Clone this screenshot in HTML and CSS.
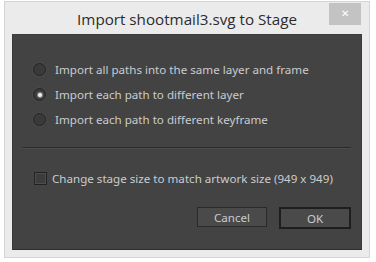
FILE: index.html
```html
<!DOCTYPE html>
<html lang="en">
<head>
    <meta charset="UTF-8">
    <title>Import to Stage</title>
    <link rel="stylesheet" href="styles.css">
</head>
<body>
    <!-- Dialog window -->
    <div class="window">
        <div class="titlebar">
            <span></span>
            <div class="title">Import shootmail3.svg to Stage</div>
            <button class="close-button">&#x2715;</button>
        </div>

        <div class="panel">
            <div class="options">
                <label class="radio-row"><span class="radio"></span>Import all paths into the same layer and frame</label>
                <label class="radio-row"><span class="radio checked"></span>Import each path to different layer</label>
                <label class="radio-row"><span class="radio"></span>Import each path to different keyframe</label>
            </div>

            <div class="separator"></div>

            <label class="check-row"><span class="checkbox"></span>Change stage size to match artwork size (949 x 949)</label>

            <div class="buttons">
                <button class="btn">Cancel</button>
                <button class="btn btn-default">OK</button>
            </div>
        </div>
    </div>
</body>
</html>
```

FILE: styles.css
```css
body {
    margin: 0;
    background: #ffffff;
    font-family: "Noto Sans", "DejaVu Sans", sans-serif;
}
.window {
    box-sizing: border-box;
    width: 366px;
    height: 257px;
    margin: 1px 0 0 4px;
    border: 1px solid #d4d4d4;
    background: #ebebeb;
    padding: 0 7px 7px 7px;
    display: flex;
    flex-direction: column;
}
.titlebar {
    height: 32px;
    display: grid;
    grid-template-columns: 33px 1fr 33px;
    align-items: start;
}
.title {
    text-align: center;
    font-family: "Open Sans", "Noto Sans", sans-serif;
    font-size: 15.2px;
    color: #2b2b2b;
    padding-top: 7px;
}
.close-button {
    margin-top: 1px;
    width: 32px;
    height: 22px;
    border: none;
    background: #c3c3c3;
    color: #ffffff;
    font-size: 10px;
    padding: 0;
    line-height: 22px;
}
/* dark Flash-style panel */
.panel {
    flex: 1;
    background: #434343;
    border: 1px solid #3b3b3b;
    border-bottom-color: #2f2f2f;
    display: flex;
    flex-direction: column;
    color: #c9ccd0;
    font-size: 11.6px;
}
.options {
    padding: 22px 0 0 20px;
}
.radio-row {
    height: 25px;
    display: flex;
    align-items: center;
    gap: 9px;
}
.radio {
    box-sizing: border-box;
    width: 13px;
    height: 13px;
    border-radius: 50%;
    border: 1.5px solid #232323;
    background: #3a3a3a;
    box-shadow: 0 0 0 1px #4a4a4a;
    display: flex;
    align-items: center;
    justify-content: center;
}
.radio.checked::after {
    content: "";
    width: 4px;
    height: 4px;
    border-radius: 50%;
    background: #eeeeee;
    box-shadow: 0 0 1px 1px #8a8a8a;
}
.separator {
    margin: 15px 10px 0 10px;
    height: 1px;
    background: #2a2a2a;
    border-bottom: 1px solid #4c4c4c;
}
.check-row {
    margin: 22px 0 0 21px;
    display: flex;
    align-items: center;
    gap: 5px;
    height: 14px;
}
.checkbox {
    box-sizing: border-box;
    width: 13px;
    height: 13px;
    border: 1px solid #222222;
    background: #3c3c3c;
    box-shadow: inset 0 0 0 1px #4d4d4d;
}
.buttons {
    display: flex;
    justify-content: flex-end;
    gap: 12px;
    margin: 22px 10px 0 0;
}
.btn {
    box-sizing: border-box;
    width: 70px;
    height: 20px;
    background: #4a4a4a;
    border: 1px solid #2b2b2b;
    color: #c9ccd0;
    font-family: "Noto Sans", sans-serif;
    font-size: 11.6px;
    padding: 0;
}
.btn-default {
    width: 72px;
    height: 22px;
    border: 2px solid #1e1e1e;
}
```
